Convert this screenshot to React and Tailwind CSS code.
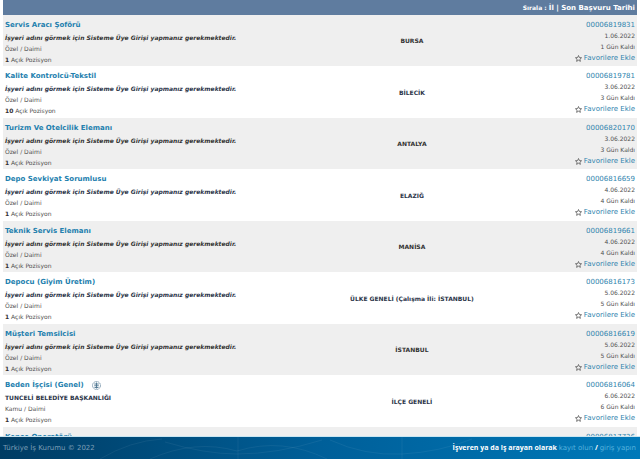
import React from "react";

const jobs = [
  { title: "Servis Aracı Şoförü", type: "Özel", count: 1, place: "BURSA", no: "00006819831", date: "1.06.2022", left: 1 },
  { title: "Kalite Kontrolcü-Tekstil", type: "Özel", count: 10, place: "BİLECİK", no: "00006819781", date: "3.06.2022", left: 3 },
  { title: "Turizm Ve Otelcilik Elemanı", type: "Özel", count: 1, place: "ANTALYA", no: "00006820170", date: "3.06.2022", left: 3 },
  { title: "Depo Sevkiyat Sorumlusu", type: "Özel", count: 1, place: "ELAZIĞ", no: "00006816659", date: "4.06.2022", left: 4 },
  { title: "Teknik Servis Elemanı", type: "Özel", count: 1, place: "MANİSA", no: "00006819661", date: "4.06.2022", left: 4 },
  { title: "Depocu (Giyim Üretim)", type: "Özel", count: 1, place: "ÜLKE GENELİ (Çalışma İli: İSTANBUL)", no: "00006816173", date: "5.06.2022", left: 5 },
  { title: "Müşteri Temsilcisi", type: "Özel", count: 1, place: "İSTANBUL", no: "00006816619", date: "5.06.2022", left: 5 },
  { title: "Beden İşçisi (Genel)", type: "Kamu", employer: "TUNCELİ BELEDİYE BAŞKANLIĞI", count: 1, place: "İLÇE GENELİ", no: "00006816064", date: "6.06.2022", left: 6 },
  { title: "Kepçe Operatörü", no: "00006817726" },
];

const Star = () => (
  <svg viewBox="0 0 16 16" className="size-[7px] shrink-0" fill="none" stroke="#555" strokeWidth="1.8" aria-hidden="true">
    <path d="M8 1.200 10 5.800l5 .5-3.800 3.300 1.100 4.900L8 11.900l-4.300 2.600 1.100-4.900L1 6.300l5-.5z" />
  </svg>
);

const PublicBadge = () => (
  <svg viewBox="0 0 18 18" className="size-[9px] shrink-0" fill="none" stroke="#4d7490" aria-hidden="true">
    <circle cx="9" cy="9" r="8" strokeWidth="1.400" strokeDasharray="3 1" />
    <path d="M9 3v12M4.500 6h9M4.500 9.500h9M5 13h8" strokeWidth="1.800" />
  </svg>
);

const JobRow = ({ job }) => (
  <tr className="h-[51px] even:h-[52px] bg-white odd:bg-[#efefef] text-[#333] even:text-[#2b3448]">
    <td className="pl-0.5 pt-[5px] align-top whitespace-nowrap">
      <div className="flex items-center gap-2 leading-[10px]">
        <a href="#" className="text-[7px] font-bold text-[#2380ae]">{job.title}</a>
        {job.employer && <PublicBadge />}
      </div>
      {job.type && (
        <>
          {job.employer ? (
            <p className="mt-0.5 font-bold">{job.employer}</p>
          ) : (
            <p className="mt-0.5 font-bold italic">İşyeri adını görmek için Sisteme Üye Girişi yapmanız gerekmektedir.</p>
          )}
          <p className="text-[#505050]">{job.type} / Daimi</p>
          <p className="text-[#505050]"><b className="text-[#333]">{job.count}</b> Açık Pozisyon</p>
        </>
      )}
    </td>
    <td className="text-center align-middle font-bold">{job.place}</td>
    <td className="pr-0.5 pt-[5px] text-right align-top">
      <a href="#" className="block text-[7px] leading-[10px] text-[#2f84ae]">{job.no}</a>
      {job.date && (
        <>
          <p className="text-[#505050]">{job.date}</p>
          <p className="text-[#505050]">{job.left} Gün Kaldı</p>
          <a href="#" className="flex items-center justify-end gap-0.5 text-[7px] leading-3 text-[#2f84ae]">
            <Star />
            Favorilere Ekle
          </a>
        </>
      )}
    </td>
  </tr>
);

const App = () => {
  return (
    <div className="h-screen flex flex-col bg-white font-['DejaVu_Sans',sans-serif] text-[6px] leading-[11px]">
      <main className="flex-1 min-h-0 overflow-hidden px-[3px]">
        <table className="w-full table-fixed">
          <colgroup>
            <col className="w-1/2" />
            <col className="w-[29%]" />
            <col className="w-[21%]" />
          </colgroup>
          <thead>
            <tr className="bg-[#5f7c9f] text-white">
              <th colSpan={3} className="h-[15px] pr-0.5 text-right font-bold">
                Sırala :{" "}
                <button className="text-[7px]">İl</button>
                <span className="text-[7px]"> | </span>
                <button className="text-[7px]">Son Başvuru Tarihi</button>
              </th>
            </tr>
          </thead>
          <tbody>
            {jobs.map((job) => (
              <JobRow key={job.no} job={job} />
            ))}
          </tbody>
        </table>
      </main>

      <footer className="relative h-[23px] shrink-0 flex items-center justify-between pl-[3px] pr-1 text-[7px] border-t border-[#c9e6f2] bg-linear-to-r from-[#003c63] via-[#005f99] to-[#0079b9]">
        {/* faint pattern behind the text */}
        <svg viewBox="0 0 640 22" preserveAspectRatio="none" className="absolute inset-0 size-full" fill="none" stroke="#fff" strokeOpacity="0.06" aria-hidden="true">
          <path d="M150 22q45-20 87-8 45-14 90 8M165 5q40 12 72 12 40 0 85-14M238 0v22M402 0v22M100 22q30-18 62-20M330 3q35 16 72 14 38-2 70-15" />
        </svg>
        <p className="relative text-[#7c9db5]">Türkiye İş Kurumu © 2022</p>
        <p className="relative font-['Open_Sans',sans-serif] font-bold text-white">
          İşveren ya da iş arayan olarak{" "}
          <a href="#" className="font-['DejaVu_Sans',sans-serif] font-normal text-[#55b2de]">kayıt olun</a> /{" "}
          <a href="#" className="font-['DejaVu_Sans',sans-serif] font-normal text-[#55b2de]">giriş yapın</a>
        </p>
      </footer>
    </div>
  );
};

export default App;
